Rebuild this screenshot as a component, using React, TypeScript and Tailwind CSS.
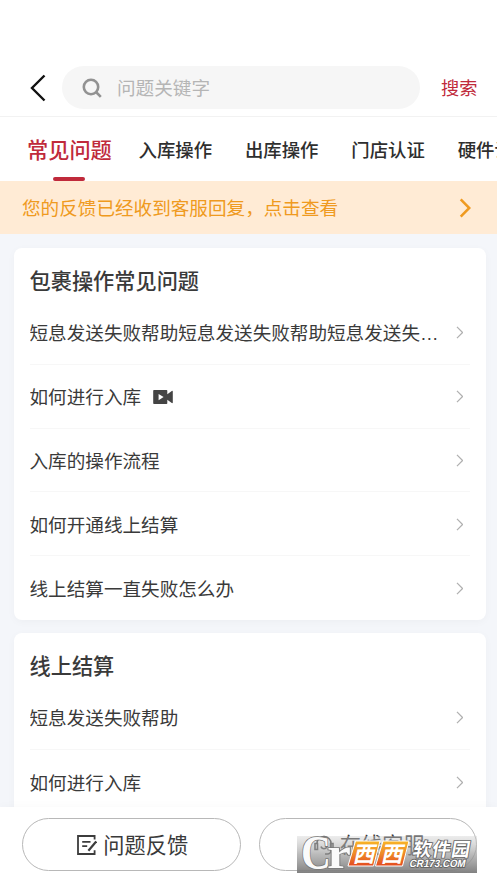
import { useState } from 'react';

type Question = {
  title: string;
  video?: boolean;
};

type Section = {
  name: string;
  questions: Question[];
};

const tabs = ['常见问题', '入库操作', '出库操作', '门店认证', '硬件设备'];

const sections: Section[] = [
  {
    name: '包裹操作常见问题',
    questions: [
      { title: '短息发送失败帮助短息发送失败帮助短息发送失败帮助' },
      { title: '如何进行入库', video: true },
      { title: '入库的操作流程' },
      { title: '如何开通线上结算' },
      { title: '线上结算一直失败怎么办' },
    ],
  },
  {
    name: '线上结算',
    questions: [
      { title: '短息发送失败帮助' },
      { title: '如何进行入库' },
    ],
  },
];

const Chevron = ({ className }: { className: string }) => (
  <svg viewBox="0 0 8 14" fill="none" stroke="currentColor" className={className}>
    <path d="M1 1l6 6-6 6" />
  </svg>
);

const VideoIcon = () => (
  <svg viewBox="0 0 20 14" className="ml-[11.5px] h-[14px] w-5 shrink-0">
    <path
      fill="#444"
      fillRule="evenodd"
      d="M1 0h12.500a.8.8 0 0 1 .8.8v3.400L18.800.9c.5-.3 1 0 1 .5v11.200c0 .5-.5.8-1 .5l-4.500-3.300v3.400a.8.8 0 0 1-.8.8H1a.8.8 0 0 1-.8-.8V.8A.8.8 0 0 1 1 0Zm4.600 4v6.200L10.600 7 5.600 4Z"
    />
  </svg>
);

const FeedbackIcon = () => (
  <svg viewBox="0 0 20 20" fill="none" stroke="#3c3c3c" strokeWidth="1.8" className="mr-[6px] h-5 w-5">
    <path d="M17.600 4.500V1H1v18h16.600v-3.800" />
    <path d="M5.200 6.800h8.300M5.200 11.200h5" />
    <path d="M19.200 6.400l-7.800 9.400" strokeWidth="2.200" />
  </svg>
);

const ServiceIcon = () => (
  <svg viewBox="0 0 20 20" fill="none" stroke="#3c3c3c" strokeWidth="1.6" className="mr-[6px] h-5 w-5">
    <path d="M3 8.500a7 7 0 0 1 14 0v7a3.500 3.500 0 0 1-3.500 3.500H11" />
    <path d="M3.500 8.500H1v6h2.500zM16.500 8.500H19v6h-2.500zM7 11.500c1 3 5 3 6 0" />
  </svg>
);

// Site badge laid over the lower right corner
const SiteBadge = () => (
  <svg
    viewBox="0 0 180 37"
    className="absolute bottom-[10px] left-[297px] h-[37px] w-[180px] overflow-visible"
  >
    <defs>
      <linearGradient id="badge-bg" x1="0" y1="0" x2="0" y2="1">
        <stop offset="0" stopColor="#d0d0d0" stopOpacity="0.4" />
        <stop offset="0.5" stopColor="#9c9c9c" stopOpacity="0.7" />
        <stop offset="1" stopColor="#7a7a7a" stopOpacity="0.95" />
      </linearGradient>
      <linearGradient id="badge-tile" x1="0" y1="0" x2="0" y2="1">
        <stop offset="0" stopColor="#f8b526" />
        <stop offset="0.5" stopColor="#ef8a28" />
        <stop offset="1" stopColor="#e34a20" />
      </linearGradient>
    </defs>
    <rect width="180" height="37" fill="url(#badge-bg)" />
    <g
      fill="#fafafa"
      stroke="#777"
      strokeWidth="1.6"
      paintOrder="stroke"
      fontFamily="Liberation Serif, serif"
      fontWeight="700"
    >
      <text x="4" y="32.500" fontSize="49" textLength="30" lengthAdjust="spacingAndGlyphs">C</text>
      <text x="30" y="32" fontSize="44" textLength="24" lengthAdjust="spacingAndGlyphs">r</text>
    </g>
    <g fill="url(#badge-tile)" stroke="#fff" strokeWidth="1" strokeLinejoin="round">
      <path d="M58.500 5H83l-6.500 25H51Z" />
      <path d="M86 5h26l-6.500 25H78.500Z" />
    </g>
    <g
      fill="#fff"
      fontFamily="Noto Sans CJK SC, sans-serif"
      fontWeight="700"
      fontSize="22"
      transform="translate(0 26) skewX(-13)"
    >
      <text x="55.500" y="0">西</text>
      <text x="83.500" y="0">西</text>
    </g>
    <g
      fill="#fff"
      stroke="#666"
      strokeWidth="1.800"
      paintOrder="stroke"
      fontWeight="700"
    >
      <text
        transform="translate(115 20) skewX(-10)"
        fontSize="18.500"
        fontFamily="Noto Sans CJK SC, sans-serif"
        textLength="57"
      >
        软件园
      </text>
      <text
        transform="translate(112 30.500) skewX(-12)"
        fontSize="10.500"
        fontFamily="Liberation Sans, sans-serif"
        textLength="56"
        lengthAdjust="spacingAndGlyphs"
      >
        CR173.COM
      </text>
    </g>
  </svg>
);

const App = () => {
  const [active, setActive] = useState(0);

  return (
    <div className="relative flex h-[883px] w-[497px] flex-col overflow-hidden bg-white font-['Noto_Sans_CJK_SC',sans-serif] text-[#3a3a3a]">
      {/* Search header */}
      <header className="flex h-[117px] shrink-0 items-end border-b border-[#f2f2f2] pb-[7px] pl-[30px]">
        <button className="flex h-[43px] w-8 items-center" aria-label="返回">
          <svg viewBox="0 0 16 28" fill="none" stroke="#111" strokeWidth="2.400" className="h-7 w-4">
            <path d="M14.500 1.500L2 14l12.500 12.500" />
          </svg>
        </button>
        <div className="flex h-[43px] w-[358px] items-center rounded-full bg-[#f6f6f6] pl-5">
          <svg viewBox="0 0 20 20" fill="none" stroke="#929292" strokeWidth="2.600" className="h-5 w-5">
            <circle cx="9" cy="9" r="7.200" />
            <path d="M14 14l4.800 4.800" />
          </svg>
          <span className="ml-[15px] pb-0.5 text-[18.6px] text-[#b5b5b5]">问题关键字</span>
        </div>
        <button className="ml-[21px] h-[43px] text-[18.2px] text-[#c02a3b]">搜索</button>
      </header>

      {/* Category tabs */}
      <nav className="flex h-16 shrink-0 gap-[32.8px] overflow-hidden pl-[27px] whitespace-nowrap">
        {tabs.map((tab, i) => (
          <button
            key={tab}
            onClick={() => setActive(i)}
            className={
              i === active
                ? '-mr-[6px] flex shrink-0 flex-col items-center text-[21.2px] font-medium text-[#c02a3b]'
                : 'flex shrink-0 flex-col items-center text-[18.4px] font-medium text-[#2e2e2e]'
            }
          >
            <span className={i === active ? 'flex h-[60px] items-center pt-[3px]' : 'flex h-[60px] items-center pt-[5px]'}>
              {tab}
            </span>
            {i === active && <span className="h-1 w-8 rounded-full bg-[#c02a3b]" />}
          </button>
        ))}
      </nav>

      {/* Reply notice */}
      <div className="flex h-[53px] shrink-0 items-center justify-between bg-[#ffebd5] pr-[26px] pl-[22px] text-[18.6px] text-[#ef9a20]">
        <span className="pb-0.5">您的反馈已经收到客服回复，点击查看</span>
        <Chevron className="h-5 w-[12px] stroke-[1.8]" />
      </div>

      <main className="flex min-h-0 flex-1 flex-col gap-[13px] overflow-hidden bg-[#f4f6fa] pt-[14px] pr-[11px] pl-[14px]">
        {sections.map((section) => (
          <section
            key={section.name}
            className="shrink-0 rounded-lg bg-white pr-4 pl-[15.5px] shadow-[0_2px_8px_rgba(0,0,0,0.03)]"
          >
            <h2 className="h-[53px] pt-4 text-[21.2px] leading-[31px] font-medium">{section.name}</h2>
            <ul className="divide-y divide-[#f7f7f7]">
              {section.questions.map((question) => (
                <li key={question.title} className="flex h-[63.8px] items-center pt-px pr-[7px]">
                  <span className="max-w-[412px] truncate pt-[3px] font-['Liberation_Sans','Noto_Sans_CJK_SC',sans-serif] text-[18.6px]">
                    {question.title}
                  </span>
                  {question.video && <VideoIcon />}
                  <Chevron className="ml-auto h-[13px] w-[7.5px] shrink-0 stroke-[1.3] text-[#b0b0b0]" />
                </li>
              ))}
            </ul>
          </section>
        ))}
      </main>

      {/* Bottom actions */}
      <footer className="flex h-[76px] shrink-0 gap-[18px] bg-white pt-[11px] pr-5 pl-[22px] shadow-[0_-2px_8px_rgba(0,0,0,0.02)]">
        <button className="flex h-[53px] flex-1 items-center justify-center rounded-full border border-[#b8b8b8] pl-[3px] text-[21.2px]">
          <FeedbackIcon />
          <span className="pb-px">问题反馈</span>
        </button>
        <button className="flex h-[53px] flex-1 items-center justify-center rounded-full border border-[#b8b8b8] pl-[3px] text-[21.2px]">
          <ServiceIcon />
          <span className="pb-px">在线客服</span>
        </button>
      </footer>

      <SiteBadge />
    </div>
  );
};

export default App;
